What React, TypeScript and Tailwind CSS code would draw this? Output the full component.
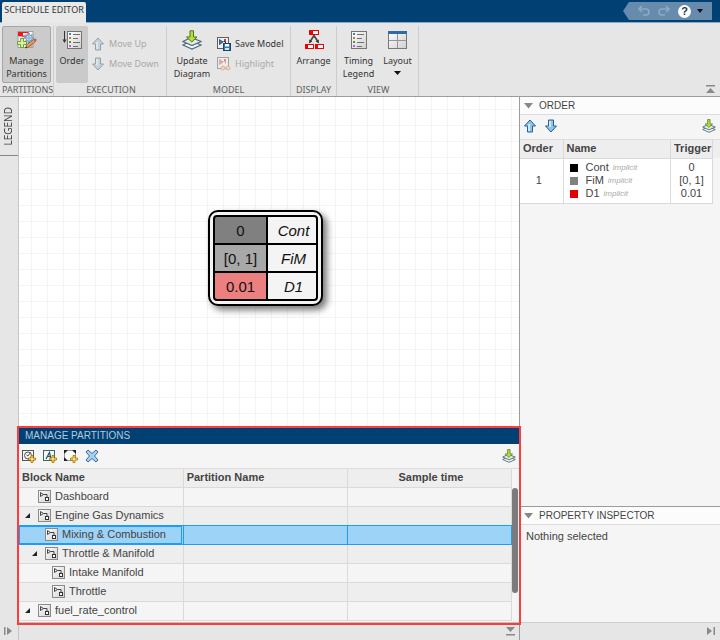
import React from "react";

type IconProps = { className?: string };

function ManageIcon() {
  return (
    <svg width="20" height="20" viewBox="0 0 20 20" aria-hidden="true">
      <rect x="1" y="1.500" width="15" height="16" fill="#f4f4f4" stroke="#a0a0a0" />
      <path d="M1.500 6.500h14M6 1.500v16M11 1.500v16M1.500 12h14" stroke="#b4b4b4" />
      <rect x="1" y="2" width="4.500" height="4" fill="#f01818" />
      <rect x="5.500" y="2.500" width="5.500" height="3.500" fill="#fff" stroke="#f01818" />
      <rect x="11" y="13" width="5" height="4" fill="#f3a08c" />
      <g stroke="#6d9cc6" strokeWidth="1.500">
        <path d="M12 3v10M7 8h10M8.500 4.500l7 7M15.500 4.500l-7 7" />
      </g>
      <circle cx="12" cy="8" r="3.200" fill="#c9dff0" stroke="#6d9cc6" />
      <circle cx="12" cy="8" r="1.200" fill="#fff" stroke="#6d9cc6" />
      <path d="M3.500 8.500h3v3h3v3h-3v3h-3v-3h-3v-3h3z" fill="#d8f0a4" stroke="#69a52b" />
      <path d="M8.500 18l1-3 7-5.500 2 2-7 5.500z" fill="#e0a060" stroke="#7d5228" strokeWidth=".8" />
      <path d="M16.500 9.500l1-.8q1-.6 1.700.2t.2 1.800l-1 .8z" fill="#c05a70" />
      <path d="M8.500 18l.6-1.600 1.200 1z" fill="#222" />
    </svg>
  );
}

function ListIcon({ arrow = false }: { arrow?: boolean }) {
  return (
    <svg width="20" height="20" viewBox="0 0 20 20" aria-hidden="true">
      <defs>
        <linearGradient id="sheet" x1="0" y1="0" x2="1" y2="1">
          <stop offset="0" stopColor="#fff" />
          <stop offset="1" stopColor="#d0d0d0" />
        </linearGradient>
      </defs>
      {arrow && <path d="M2.500 1v10" stroke="#333" />}
      {arrow && <path d="M.5 9.500h4L2.500 13z" fill="#333" />}
      <rect x={arrow ? 5.5 : 2.5} y="1.500" width={arrow ? 14 : 15} height="17" fill="url(#sheet)" stroke="#757575" />
      <g transform={arrow ? "translate(3 0)" : "translate(0 0)"}>
        <rect x="4" y="3" width="2" height="2" fill="#1c8fd0" />
        <rect x="4" y="7" width="2" height="2" fill="#f2642a" />
        <rect x="4" y="11" width="2" height="2" fill="#2f9c5c" />
        <rect x="4" y="15" width="2" height="2" fill="#dd4fd0" />
        <path d="M8 4.500h7M8 8.500h5M8 12.500h7M8 16.500h5" stroke="#707070" />
      </g>
    </svg>
  );
}

function UpdateIcon({ size = 20 }: { size?: number }) {
  return (
    <svg width={size} height={size} viewBox="0 0 20 20" aria-hidden="true">
      <path d="M1 15l8-4 10 4-9 4z" fill="#f4f8fa" stroke="#516d7b" strokeWidth="1.300" />
      <path d="M1 11.500l8-4 10 4-9 4z" fill="#e2eaee" stroke="#516d7b" strokeWidth="1.300" />
      <path d="M8 .8h3.500V7H15l-5.200 5L4.500 7H8z" fill="#b6df35" stroke="#4f7418" />
    </svg>
  );
}

function ArrowIcon({ down = false, className = "" }: IconProps & { down?: boolean }) {
  return (
    <svg width="14" height="14" viewBox="0 0 14 14" className={className} aria-hidden="true">
      <path
        d={down ? "M4.500 1h5v6h3L7 13 1.500 7h3z" : "M4.500 13h5V7h3L7 1 1.500 7h3z"}
        fill="#8cc6ee"
        stroke="#2a5f8e"
        strokeLinejoin="round"
      />
      <path d={down ? "M6 2v6" : "M6 12V5"} stroke="#e3f4ff" strokeWidth="1.500" />
    </svg>
  );
}

function ModelIcon({ highlight = false }: { highlight?: boolean }) {
  return (
    <svg width="14" height="14" viewBox="0 0 14 14" className={highlight ? "opacity-50" : ""} aria-hidden="true">
      <rect x=".5" y=".5" width="11" height="11" fill="#eef2f5" stroke="#606060" />
      <path d="M2.500 2.500v5l3.500-2.500z" fill={highlight ? "#d67b62" : "#3f7fb8"} stroke={highlight ? "#b55" : "#22405c"} strokeWidth=".8" />
      <path d="M6.500 4.500h2v2" fill="none" stroke={highlight ? "#b66" : "#222"} />
      <rect x="7" y="2" width="2" height="2" fill="#d83c2c" />
      {highlight ? (
        <g fill="#f4c59c" stroke="#dd8140">
          <circle cx="6" cy="11" r="2" />
          <circle cx="11" cy="11" r="2" />
        </g>
      ) : (
        <g>
          <rect x="6.500" y="6.500" width="7" height="7" fill="#3d78ac" stroke="#16466f" />
          <rect x="8" y="7" width="4" height="2.500" fill="#fff" />
          <rect x="8" y="11" width="4" height="2" fill="#d8e8f3" />
        </g>
      )}
    </svg>
  );
}

function ArrangeIcon() {
  return (
    <svg width="20" height="20" viewBox="0 0 20 20" aria-hidden="true">
      <g fill="#fff" stroke="#f00000">
        <rect x="5.500" y=".5" width="9" height="4" />
        <rect x="1.500" y="14.500" width="8" height="4" />
        <rect x="11.500" y="14.500" width="8" height="4" />
      </g>
      <path d="M5 0h4v5H5zM1 14h3v5H1zM11 14h3v5h-3z" fill="#f00000" />
      <path d="M10 5.500L6.500 11M10 5.500L13.500 11" stroke="#444" strokeWidth="1.600" />
      <path d="M5 13.500l.3-4 3 2zM15 13.500l-.3-4-3 2z" fill="#333" />
    </svg>
  );
}

function LayoutIcon() {
  return (
    <svg width="20" height="20" viewBox="0 0 20 20" aria-hidden="true">
      <rect x=".5" y="1.500" width="18" height="17" fill="url(#sheet)" stroke="#777" />
      <rect x="0" y="1" width="19" height="3" fill="#2b6da4" />
      <path d="M9.500 4v14.500M1 10.500h17.500" stroke="#959595" />
    </svg>
  );
}

function BlockIcon() {
  return (
    <svg width="13" height="13" viewBox="0 0 13 13" className="shrink-0" aria-hidden="true">
      <rect x=".5" y=".5" width="12" height="12" fill="url(#sheet)" stroke="#8a8a8a" />
      <path d="M2.500 2.500v4l3-2zM5.500 4.500h3.500v2.500" fill="none" stroke="#444" />
      <rect x="7.500" y="7.500" width="3" height="3" fill="#fff" stroke="#333" />
    </svg>
  );
}

function AddIcon({ kind }: { kind: "clock" | "event" | "frame" }) {
  return (
    <svg width="14" height="14" viewBox="0 0 14 14" aria-hidden="true">
      {kind === "clock" && (
        <g fill="none" stroke="#555">
          <rect x=".5" y="1.500" width="11" height="10" fill="#f5f5f5" />
          <circle cx="6" cy="6.500" r="3.500" />
          <path d="M6 7l2.500-3.500M6 7L4.500 6" />
        </g>
      )}
      {kind === "event" && (
        <g fill="none" stroke="#32705d">
          <rect x=".5" y="1.500" width="11" height="10" fill="#f5f5f5" />
          <path d="M3 10L6.500 3.500 8 10M4.500 7.500h3" stroke="#2c5360" strokeWidth="1.200" />
        </g>
      )}
      {kind === "frame" && (
        <g>
          <rect x=".5" y="1.500" width="11" height="10" rx="3" fill="#fafafa" stroke="#999" />
          <path d="M0 1h4L0 5zM12 1H8l4 4zM0 12h4L0 8z" fill="#222" />
        </g>
      )}
      <path d="M9 6.500h2V9h2.500v2H11v2.500H9V11H6.500V9H9z" fill="#ffdf70" stroke="#a67100" strokeWidth=".8" />
    </svg>
  );
}

function DeleteIcon() {
  return (
    <svg width="14" height="14" viewBox="0 0 14 14" aria-hidden="true">
      <path
        d="M3 1l4 3.500L11 1l2 2-3.500 4L13 11l-2 2-4-3.500L3 13l-2-2 3.500-4L1 3z"
        fill="#a8d2ee"
        stroke="#34699b"
        strokeLinejoin="round"
      />
    </svg>
  );
}

function Triangle() {
  return (
    <svg width="9" height="6" viewBox="0 0 9 6" aria-hidden="true">
      <path d="M0 0h9L4.500 5.500z" fill="#888" />
    </svg>
  );
}

function EdgeIcon({ kind }: { kind: "up" | "down" | "expand" | "right" }) {
  const paths = {
    up: "M0 0h9v1.500H0zM4.500 3L9 8H0z",
    down: "M0 0h9L4.500 5zM0 7h9v1.500H0z",
    expand: "M0 0h1.500v8H0zM3 0l5 4-5 4z",
    right: "M0 0l5 4-5 4zM6.500 0H8v8H6.500z",
  };
  return (
    <svg width="9" height="9" viewBox="0 0 9 9" aria-hidden="true">
      <path d={paths[kind]} fill="#8a8a8a" />
    </svg>
  );
}

function Group({ title, children, className = "" }: { title: string; children: React.ReactNode; className?: string }) {
  return (
    <section className={`flex flex-col border-r border-[#cdcdcd] ${className}`}>
      <div className="flex h-[58px] items-start">{children}</div>
      <h2 className="text-center leading-[13px] whitespace-nowrap text-[#606060]">{title}</h2>
    </section>
  );
}

function BigButton({ icon, lines, className = "" }: { icon: React.ReactNode; lines: string[]; className?: string }) {
  return (
    <button className={`flex h-[57px] shrink-0 flex-col items-center rounded-[2px] border pt-[3px] leading-[13px] ${className}`}>
      <span className="mb-1">{icon}</span>
      {lines.map((line) => (
        <span key={line} className="whitespace-nowrap">{line}</span>
      ))}
    </button>
  );
}

function SmallButton({ icon, label, disabled = false }: { icon: React.ReactNode; label: string; disabled?: boolean }) {
  return (
    <button disabled={disabled} className="flex h-5 items-center gap-1 whitespace-nowrap disabled:text-[#a9a9a9]">
      {icon}
      {label}
    </button>
  );
}

const blocks = [
  { name: "Dashboard", indent: "pl-[6px]", parent: false },
  { name: "Engine Gas Dynamics", indent: "pl-[6px]", parent: true },
  { name: "Mixing & Combustion", indent: "pl-[13px]", parent: false, selected: true },
  { name: "Throttle & Manifold", indent: "pl-[13px]", parent: true },
  { name: "Intake Manifold", indent: "pl-[20px]", parent: false },
  { name: "Throttle", indent: "pl-[20px]", parent: false },
  { name: "fuel_rate_control", indent: "pl-[6px]", parent: true },
];

const partitions = [
  { name: "Cont", trigger: "0", swatch: "bg-black", fill: "bg-[#808080]" },
  { name: "FiM", trigger: "[0, 1]", swatch: "bg-[#808080]", fill: "bg-[#a8a8a8]" },
  { name: "D1", trigger: "0.01", swatch: "bg-[#e60000]", fill: "bg-[#ec8080]" },
];

function Toolstrip() {
  return (
    <div className="flex h-[74px] items-stretch border-b border-[#9c9c9c] bg-[#e6e6e6] pt-[3px] font-['Noto_Sans',sans-serif] text-[9px] text-[#333]">
      <Group title="PARTITIONS" className="w-[54px] px-[2px]">
        <BigButton icon={<ManageIcon />} lines={["Manage", "Partitions"]} className="w-[49px] border-[#a6a6a6] bg-[#cbcbcb]" />
      </Group>
      <Group title="EXECUTION" className="w-[113px] pl-[2px]">
        <BigButton icon={<ListIcon arrow />} lines={["Order"]} className="w-8 border-[#cacaca] bg-[#cacaca]" />
        <div className="flex flex-col pt-2 pl-[3px]">
          <SmallButton disabled icon={<ArrowIcon className="opacity-50 saturate-50" />} label="Move Up" />
          <SmallButton disabled icon={<ArrowIcon down className="opacity-50 saturate-50" />} label="Move Down" />
        </div>
      </Group>
      <Group title="MODEL" className="w-[124px]">
        <BigButton icon={<UpdateIcon />} lines={["Update", "Diagram"]} className="w-[50px] border-transparent" />
        <div className="flex flex-col pt-2">
          <SmallButton icon={<ModelIcon />} label="Save Model" />
          <SmallButton disabled icon={<ModelIcon highlight />} label="Highlight" />
        </div>
      </Group>
      <Group title="DISPLAY" className="w-[46px]">
        <BigButton icon={<ArrangeIcon />} lines={["Arrange"]} className="w-full border-transparent" />
      </Group>
      <Group title="VIEW" className="w-[82px] pl-[2px]">
        <BigButton icon={<ListIcon />} lines={["Timing", "Legend"]} className="w-[39px] border-transparent" />
        <button className="flex h-[57px] w-[39px] flex-col items-center pt-1 leading-[13px]">
          <span className="mb-1"><LayoutIcon /></span>
          Layout
          <svg width="7" height="13" viewBox="0 0 7 13" aria-hidden="true"><path d="M0 4h7L3.500 8z" fill="#111" /></svg>
        </button>
      </Group>
      <button aria-label="Collapse toolstrip" className="mt-auto mr-[5px] mb-[2px] ml-auto"><EdgeIcon kind="up" /></button>
    </div>
  );
}

function Canvas() {
  return (
    <section className="relative min-h-0 flex-1 overflow-hidden bg-white bg-[linear-gradient(to_right,#f4f4f4_1px,transparent_1px),linear-gradient(to_bottom,#f4f4f4_1px,transparent_1px)] bg-[size:16px_16px] bg-[position:12px_12px]">
      <div className="absolute top-[113px] left-[189px] w-[115px] rounded-[10px] border-2 border-black bg-[#f4f4f4] p-[3px] shadow-[4px_4px_7px_#777]">
        <div className="flex flex-col gap-[2px] overflow-hidden rounded-[4px] border-2 border-black bg-black text-[15px] text-[#111]">
          {partitions.map((p) => (
            <div key={p.name} className="flex h-[26px] gap-[2px] text-center leading-[27px]">
              <span className={`w-[51px] ${p.fill}`}>{p.trigger}</span>
              <span className="flex-1 bg-[#f4f4f4] pl-[3px] italic">{p.name}</span>
            </div>
          ))}
        </div>
      </div>
    </section>
  );
}

function rowClass(index: number) {
  if (blocks[index].selected) {
    return "h-[19px] bg-[#9dd3f6] [&>td]:border-r [&>td]:border-b [&>td]:border-[#1e9bff] [&>td]:p-0";
  }
  const line = blocks[index + 1]?.selected ? "[&>td]:border-b-[#1e9bff]" : "[&>td]:border-b-[#dadada]";
  const fill = index % 2 ? "bg-[#eeeeee]" : "bg-[#f5f5f5]";
  return `h-[19px] [&>td]:border-r [&>td]:border-b [&>td]:border-r-[#dadada] [&>td]:p-0 ${line} ${fill}`;
}

function ManagePartitions() {
  return (
    <section className="relative flex h-[195px] shrink-0 flex-col bg-[#f5f5f5]">
      <h2 className="h-4 bg-[#004073] pl-[6px] text-[10px] leading-[15px] text-[#b4cadd]">MANAGE PARTITIONS</h2>
      <div className="flex h-[25px] items-center gap-[7px] border-b border-[#dcdcdc] pr-[3px] pl-[3px]">
        <button aria-label="Add periodic partition"><AddIcon kind="clock" /></button>
        <button aria-label="Add aperiodic partition"><AddIcon kind="event" /></button>
        <button aria-label="Add partition from selection"><AddIcon kind="frame" /></button>
        <button aria-label="Delete partition"><DeleteIcon /></button>
        <button aria-label="Update diagram" className="ml-auto"><UpdateIcon size={14} /></button>
      </div>
      <div className="flex min-h-0 flex-1 overflow-hidden border-b border-[#b5c3c3]">
        <div className="min-w-0 flex-1">
          <table className="w-full table-fixed border-collapse">
            <thead>
              <tr className="h-[18px] bg-[#eeeeee] text-left [&>th]:border-r [&>th]:border-b [&>th]:border-[#dadada] [&>th]:p-0 [&>th]:pl-[3px] [&>th]:leading-[17px]">
                <th>Block Name</th>
                <th>Partition Name</th>
                <th className="text-center">Sample time</th>
              </tr>
            </thead>
            <tbody>
              {blocks.map((b, i) => (
                <tr key={b.name} className={rowClass(i)}>
                  <td>
                    <div className={`flex h-[18px] items-center ${b.indent} ${b.selected ? "mr-px outline-1 -outline-offset-1 outline-[#1e9bff]" : ""}`}>
                      <span className="mr-[7px] flex w-[6px] shrink-0">
                        {b.parent && (
                          <svg width="5" height="5" viewBox="0 0 5 5" aria-hidden="true"><path d="M5 0v5H0z" fill="#222" /></svg>
                        )}
                      </span>
                      <BlockIcon />
                      <span className="pl-1 whitespace-nowrap">{b.name}</span>
                    </div>
                  </td>
                  <td />
                  <td />
                </tr>
              ))}
            </tbody>
          </table>
        </div>
        <div className="w-[7px] pt-[19px]"><div className="h-[105px] w-[6px] rounded-full bg-[#7b7b7b]" /></div>
      </div>
      <div className="pointer-events-none absolute -inset-[2px] z-10 border-2 border-[#fc3d3d]" />
    </section>
  );
}

function SidePanels() {
  return (
    <aside className="flex w-[201px] shrink-0 flex-col border-l border-[#9c9c9c] bg-[#f5f5f5]">
      <section className="flex flex-1 flex-col">
        <h2 className="flex h-[18px] items-center gap-[6px] border-b border-[#dcdcdc] bg-[#fcfcfc] pl-1 text-[10px]"><Triangle />ORDER</h2>
        <div className="flex h-6 items-center gap-[7px] pr-1 pb-[2px] pl-[3px]">
          <button aria-label="Move up"><ArrowIcon /></button>
          <button aria-label="Move down"><ArrowIcon down /></button>
          <button aria-label="Update diagram" className="ml-auto"><UpdateIcon size={14} /></button>
        </div>
        <div className="border-t border-[#dcdcdc] bg-[linear-gradient(#eeeeee_18px,transparent_18px)]">
          <table className="w-[193px] table-fixed border-collapse">
            <thead>
              <tr className="h-[18px] text-left [&>th]:border-r [&>th]:border-b [&>th]:border-[#dadada] [&>th]:p-0 [&>th]:pl-[3px] [&>th]:leading-[17px]">
                <th className="w-[43px]">Order</th>
                <th>Name</th>
                <th className="w-[42px]">Trigger</th>
              </tr>
            </thead>
            <tbody>
              <tr className="h-[45px] bg-white leading-[13px] [&>td]:border-r [&>td]:border-b [&>td]:border-[#dadada] [&>td]:p-0">
                <td className="text-center"><span className="pr-[5px]">1</span></td>
                <td>
                  {partitions.map((p) => (
                    <div key={p.name} className="flex items-center pl-[6px]">
                      <span className={`mr-2 size-2 ${p.swatch}`} />
                      {p.name}
                      <i className="pl-1 text-[8px] text-[#aaa]">implicit</i>
                    </div>
                  ))}
                </td>
                <td className="text-center">
                  {partitions.map((p) => <div key={p.name}>{p.trigger}</div>)}
                </td>
              </tr>
            </tbody>
          </table>
        </div>
      </section>
      <section className="h-[116px] border-t border-[#9c9c9c]">
        <h2 className="flex h-[18px] items-center gap-[6px] border-b border-[#dcdcdc] bg-[#fcfcfc] pl-1 text-[10px]"><Triangle />PROPERTY INSPECTOR</h2>
        <p className="pt-[3px] pl-[6px] leading-4">Nothing selected</p>
      </section>
      <footer className="flex h-[18px] items-center justify-end border-t border-[#cfcfcf] bg-[#e6e6e6] pr-1">
        <button aria-label="Collapse side panels"><EdgeIcon kind="right" /></button>
      </footer>
    </aside>
  );
}

export default function App() {
  return (
    <div className="flex h-screen flex-col overflow-hidden bg-[#f5f5f5] font-['Liberation_Sans',Arial,sans-serif] text-[11px] text-[#444]">
      <header className="flex h-[23px] shrink-0 items-start justify-between border-b border-[#8aa9c4] bg-[#004073] pt-[2px]">
        <button className="-mb-px ml-[2px] h-[21px] w-[84px] rounded-t-[2px] bg-[#e9e9e9] pb-[5px] font-['Noto_Sans',sans-serif] text-[9px] whitespace-nowrap text-[#333]">SCHEDULE EDITOR</button>
        <nav aria-label="Quick access" className="mr-2 flex h-[18px] w-[89px] items-center bg-[#668bad] pl-[15px] [clip-path:polygon(0_50%,6px_0,100%_0,100%_100%,6px_100%)]">
          <button aria-label="Undo">
            <svg width="12" height="12" viewBox="0 0 12 12" fill="none" stroke="#8fabc4" strokeWidth="1.600" aria-hidden="true"><path d="M4 1L1 4l3 3M1.500 4H8a3 3 0 010 6H5" /></svg>
          </button>
          <button aria-label="Redo" className="ml-2">
            <svg width="12" height="12" viewBox="0 0 12 12" fill="none" stroke="#8fabc4" strokeWidth="1.600" aria-hidden="true"><path d="M8 1l3 3-3 3M10.500 4H4a3 3 0 000 6h3" /></svg>
          </button>
          <button aria-label="Help" className="ml-2 flex size-[13px] items-center justify-center rounded-full bg-white text-[11px] font-bold text-[#1b344b]">?</button>
          <button aria-label="Quick access menu" className="ml-[6px]">
            <svg width="6" height="4" viewBox="0 0 6 4" aria-hidden="true"><path d="M0 0h6L3 4z" fill="#111" /></svg>
          </button>
        </nav>
      </header>
      <Toolstrip />
      <main className="flex min-h-0 flex-1">
        <aside className="flex w-[19px] shrink-0 flex-col border-r border-[#c4c4c4] bg-[#e6e6e6]">
          <button className="flex h-[59px] items-center justify-center border-b border-[#858585] pr-[2px] font-['Noto_Sans',sans-serif] text-[10px]">
            <span className="rotate-180 [writing-mode:vertical-rl]">LEGEND</span>
          </button>
          <button aria-label="Expand left panel" className="mt-auto mb-1 ml-1"><EdgeIcon kind="expand" /></button>
        </aside>
        <div className="flex min-w-0 flex-1 flex-col">
          <Canvas />
          <ManagePartitions />
          <footer className="flex h-[17px] shrink-0 items-center justify-end bg-[#e6e6e6] pr-1">
            <button aria-label="Collapse bottom panel"><EdgeIcon kind="down" /></button>
          </footer>
        </div>
        <SidePanels />
      </main>
    </div>
  );
}
